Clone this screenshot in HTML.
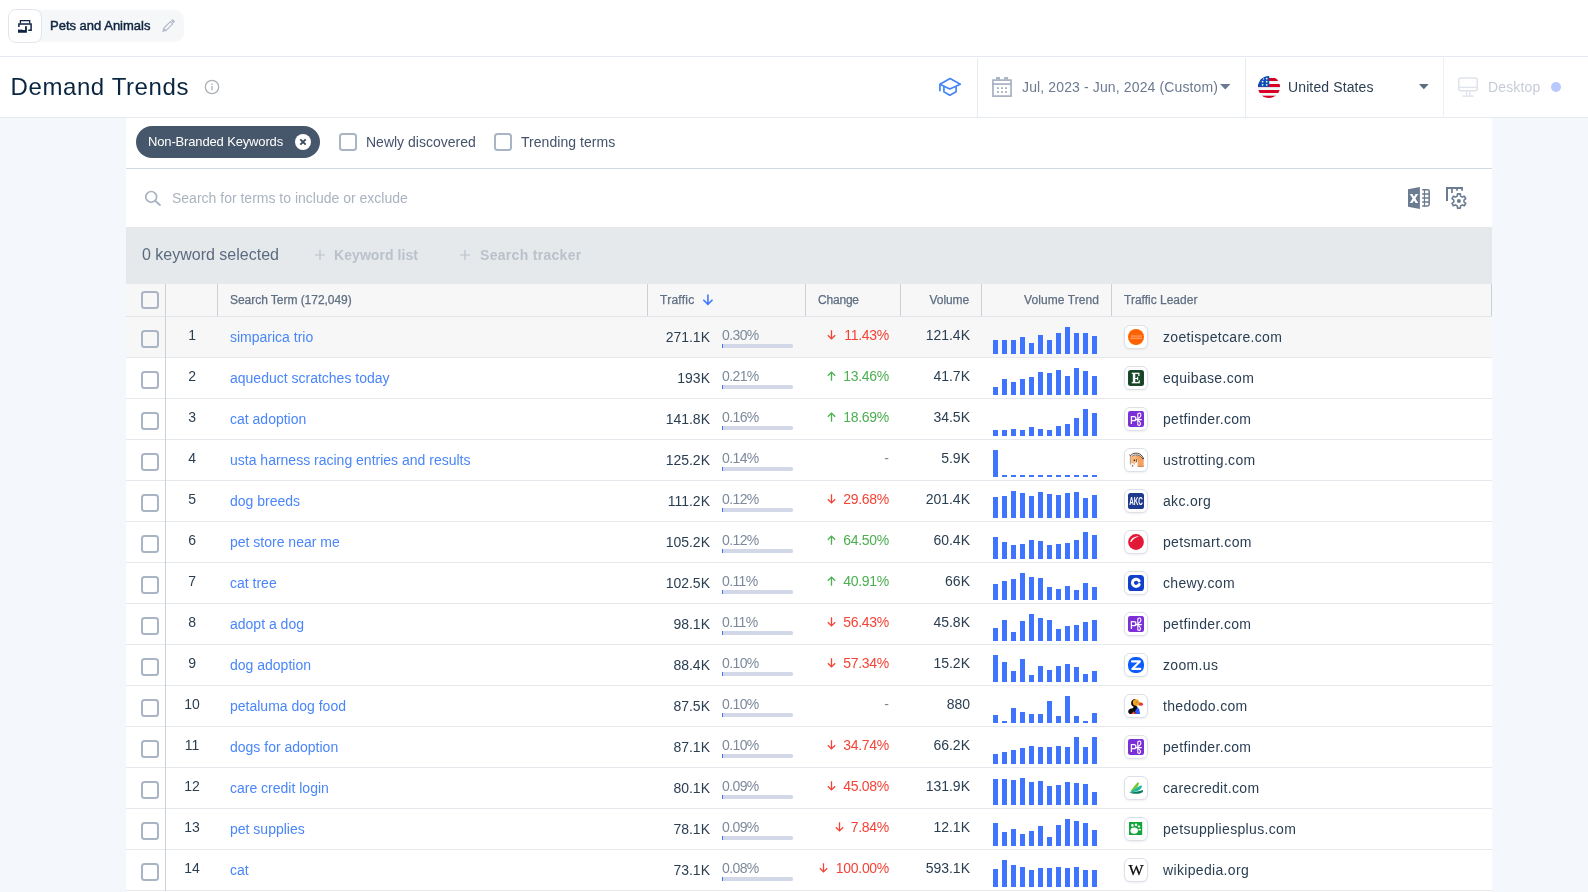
<!DOCTYPE html><html><head><meta charset="utf-8"><title>Demand Trends</title><style>
*{box-sizing:border-box;margin:0;padding:0}
html,body{width:1588px;height:892px;overflow:hidden;background:#f4f7fc;font-family:"Liberation Sans",sans-serif;color:#2a3e52}
#root{position:absolute;left:0;top:0;width:1588px;height:892px;will-change:transform}
.a{position:absolute;white-space:nowrap;line-height:1}
#top{position:absolute;left:0;top:0;width:1588px;height:57px;background:#fff;border-bottom:1px solid #e5e9f0}
#bar{position:absolute;left:0;top:57px;width:1588px;height:61px;background:#fff;border-bottom:1px solid #e5e9f0}
#card{position:absolute;left:126px;top:118px;width:1366px;height:774px;background:#fff}
.cb{position:absolute;width:18px;height:18px;border:2px solid #a9b4c5;border-radius:3.500px;background:#fff}
.row{position:absolute;left:126px;width:1366px;height:41px;border-bottom:1px solid #e5e8ec}
.t14{font-size:14px}
.lnk{color:#4a86f9}
.gr{color:#7d8a9b}
.red{color:#f44336}
.grn{color:#4caf50}
.vb{position:absolute;width:5px;background:#3e74fe}
.fav{position:absolute;width:24px;height:24px;border:1px solid #dce1e9;border-radius:6px;background:#fff;box-shadow:0 1px 2px rgba(20,40,80,.08)}
.fav svg{position:absolute;left:3px;top:3px;width:16px;height:16px;display:block}
.vs{position:absolute;width:1px;background:#cad1da}
</style></head><body><div id="root">
<div id="top"></div>
<div class="a" id="chip" style="left:9px;top:10px;width:175px;height:32px;background:#f6f7f8;border-radius:10px"></div>
<div class="a" id="chipicon" style="left:8px;top:9px;width:34px;height:34px;background:#fff;border:1px solid #e1e6ee;border-radius:8px"></div>
<svg class="a" id="ic-ind" style="left:18px;top:20px" width="14" height="13" viewBox="0 0 14 13"><path d="M2.400 3.600V.65h9.300v2.950" fill="none" stroke="#0f2542" stroke-width="1.300"/><path d="M.9 7V3.900h12.200v6.300h-2.800" fill="none" stroke="#0f2542" stroke-width="1.500"/><path d="M0 12.800V9.300l1.500.8V9.300l1.700.8V9.300l1.800.8h2V6.200h1.900v6.600z" fill="#0f2542"/></svg>
<div class="a" id="chiptxt" style="left:50px;top:19px;font-size:13px;color:#0f2542;-webkit-text-stroke:.45px #0f2542;letter-spacing:0px">Pets and Animals</div>
<svg class="a" id="ic-pen" style="left:162px;top:18.700px" width="13.200" height="13.200" viewBox="0 0 13.200 13.200"><path d="M1.700 9.300 8.400 2.600l2.300 2.300L4 11.600z" fill="none" stroke="#b3bbc7" stroke-width="1.200" stroke-linejoin="round"/><path d="M.2 13l1.100-3.900 2.800 2.800z" fill="#b3bbc7"/><path d="M9.100 1.700 10.700.1l2.500 2.500-1.600 1.600z" fill="#b3bbc7"/></svg>
<div id="bar"></div>
<div class="a" id="title" style="left:10.500px;top:75px;font-size:24px;color:#092540;letter-spacing:.6px">Demand Trends</div>
<svg class="a" id="ic-info" style="left:204px;top:79px" width="16" height="16" viewBox="0 0 16 16"><circle cx="8" cy="8" r="6.700" fill="none" stroke="#aab0b8" stroke-width="1.300"/><rect x="7.350" y="7" width="1.300" height="4.300" fill="#aab0b8"/><rect x="7.350" y="4.600" width="1.300" height="1.400" fill="#aab0b8"/></svg>
<svg class="a" id="ic-edu" style="left:938px;top:77px" width="24" height="20" viewBox="0 0 24 20"><path d="M12.100 1.500 1.900 7.200l9.900 4.800 10.500-4.800z" fill="none" stroke="#4385f5" stroke-width="1.700" stroke-linejoin="round"/><path d="M5.900 9.300v5.500l5.900 3.400 6.300-3.400V9.300" fill="none" stroke="#4385f5" stroke-width="1.700" stroke-linejoin="round"/><path d="M1.900 7.200v7" stroke="#4385f5" stroke-width="1.700"/></svg>
<div class="vs" style="left:977px;top:58px;height:60px;background:#e8ebf0"></div>
<div class="vs" style="left:1245px;top:58px;height:60px;background:#e8ebf0"></div>
<div class="vs" style="left:1443px;top:58px;height:60px;background:#eef0f4"></div>
<svg class="a" id="ic-cal" style="left:992px;top:77px" width="20" height="20" viewBox="0 0 20 20"><rect x=".95" y="3.100" width="18.100" height="16" fill="none" stroke="#a8b1c2" stroke-width="1.700"/><rect x=".1" y="6.200" width="19.800" height="1.700" fill="#a8b1c2"/><rect x="4" y=".1" width="4" height="2.400" fill="#a8b1c2"/><rect x="12.100" y=".1" width="4" height="2.400" fill="#a8b1c2"/><g fill="#a8b1c2"><rect x="5" y="10.200" width="1.900" height="1.800"/><rect x="9" y="10.200" width="1.900" height="1.800"/><rect x="13" y="10.200" width="1.900" height="1.800"/><rect x="5" y="14.100" width="1.900" height="1.800"/><rect x="9" y="14.100" width="1.900" height="1.800"/><rect x="13" y="14.100" width="1.900" height="1.800"/></g></svg>
<div class="a" id="date" style="left:1022px;top:80px;font-size:14px;color:#6b7a90;letter-spacing:.13px">Jul, 2023 - Jun, 2024 (Custom)</div>
<svg class="a" style="left:1220px;top:84px" width="11" height="6" viewBox="0 0 11 6"><path d="M0 0h10.500L5.250 5.500z" fill="#6b7a90"/></svg>
<svg class="a" id="flag" style="left:1258px;top:76px" width="22" height="22" viewBox="0 0 22 22"><defs><clipPath id="fc"><circle cx="11" cy="11" r="11"/></clipPath></defs><g clip-path="url(#fc)"><rect width="22" height="22" fill="#f1f8f8"/><g fill="#d80027"><rect y="2" width="22" height="3"/><rect y="8" width="22" height="3.100"/><rect y="14" width="22" height="3"/><rect y="19.700" width="22" height="2.300"/></g><rect width="11.200" height="10.900" fill="#0b4fb6"/><g fill="#f1f8f8"><circle cx="8.700" cy="2.600" r=".9"/><circle cx="4.600" cy="5.700" r=".9"/><circle cx="8.700" cy="5.700" r=".9"/><circle cx="4.600" cy="8.800" r=".9"/><circle cx="8.700" cy="8.800" r=".9"/><circle cx="5.500" cy="2.900" r=".7"/></g></g></svg>
<div class="a" id="country" style="left:1288px;top:80px;font-size:14px;color:#2a3e52;letter-spacing:.12px">United States</div>
<svg class="a" style="left:1419.300px;top:84px" width="10" height="6" viewBox="0 0 10 6"><path d="M0 0h9.700L4.850 5.300z" fill="#5b6b80"/></svg>
<svg class="a" id="ic-desk" style="left:1458px;top:77px" width="20" height="20" viewBox="0 0 20 20"><rect x=".75" y=".95" width="18.500" height="12.800" rx="2" fill="none" stroke="#dfe3ec" stroke-width="1.500"/><path d="M1 10.400h18" stroke="#dfe3ec" stroke-width="1.300"/><path d="M8.600 14v4.500M11.800 14v4.500" stroke="#dfe3ec" stroke-width="1.300" fill="none"/><path d="M4.500 19.100h11.100" stroke="#dfe3ec" stroke-width="1.400"/></svg>
<div class="a" id="desk" style="left:1488px;top:80px;font-size:14px;color:#c7ccd7;letter-spacing:.15px">Desktop</div>
<div class="a" style="left:1551px;top:82px;width:10px;height:10px;border-radius:5px;background:#b9c8fc"></div>
<div id="card"></div>
<div class="a" id="pill" style="left:136px;top:126px;width:184px;height:32px;border-radius:16px;background:#46566b"></div>
<div class="a" id="pilltxt" style="left:148px;top:135px;font-size:13px;color:#fff;letter-spacing:-.15px">Non-Branded Keywords</div>
<svg class="a" id="pillx" style="left:295px;top:134px" width="16" height="16" viewBox="0 0 16 16"><circle cx="8" cy="8" r="8" fill="#fff"/><path d="M5.300 5.300l5.400 5.400M10.700 5.300l-5.400 5.400" stroke="#3a4a5e" stroke-width="1.900"/></svg>
<div class="cb" style="left:339px;top:133px"></div>
<div class="a" id="nd" style="left:366px;top:135px;font-size:14px;color:#43536a;letter-spacing:0px">Newly discovered</div>
<div class="cb" style="left:494px;top:133px"></div>
<div class="a" id="tt" style="left:521px;top:135px;font-size:14px;color:#43536a;letter-spacing:.04px">Trending terms</div>
<div class="a" style="left:126px;top:168px;width:1366px;height:1px;background:#d3d9e1"></div>
<svg class="a" id="ic-search" style="left:143px;top:189px" width="19" height="19" viewBox="0 0 19 19"><circle cx="8.200" cy="7.900" r="5.400" fill="none" stroke="#a8b2c1" stroke-width="1.700"/><path d="M12.200 11.800l4.700 4.200" stroke="#a8b2c1" stroke-width="1.900" stroke-linecap="round"/></svg>
<div class="a" id="ph" style="left:172px;top:191px;font-size:14px;color:#aab3c0;letter-spacing:0px">Search for terms to include or exclude</div>
<svg class="a" id="ic-xl" style="left:1408px;top:186px" width="22" height="24" viewBox="0 0 22 24"><path d="M0 3.200 11.900.9V23L0 20.700z" fill="#6b7c91"/><path d="M14.200 3.850H19.500a1.700 1.700 0 0 1 1.700 1.700V18.300a1.700 1.700 0 0 1-1.700 1.700H14.200M14.200 7.900h7M14.200 12h7M14.200 16h7" fill="none" stroke="#6b7c91" stroke-width="1.500"/><path d="M16.450 3.200V20.700" stroke="#6b7c91" stroke-width="1.200"/><path d="M1.700 8h2.700l1.600 2.700L7.600 8h2.700l-2.950 4.550 2.950 4.550H7.600L6 14.400 4.400 17.100H1.700l2.950-4.550z" fill="#fff"/></svg>
<svg class="a" id="ic-cfg" style="left:1445px;top:186px" width="24" height="24" viewBox="0 0 24 24"><path d="M2 15V1.900h16" fill="none" stroke="#6b7c91" stroke-width="2"/><path d="M6.950 2v4.900M12 2v2.800M17.050 2v2.800" stroke="#6b7c91" stroke-width="1.700"/><path d="M15.59 10.08 L15.28 7.88 L12.52 7.88 L12.21 10.08 L10.49 11.08 L8.43 10.24 L7.04 12.64 L8.80 14.01 L8.80 15.99 L7.04 17.36 L8.43 19.76 L10.49 18.92 L12.21 19.92 L12.52 22.12 L15.28 22.12 L15.59 19.92 L17.31 18.92 L19.37 19.76 L20.76 17.36 L19.00 15.99 L19.00 14.01 L20.76 12.64 L19.37 10.24 L17.31 11.08z" fill="#fff" stroke="#6b7c91" stroke-width="1.600" stroke-linejoin="round"/><circle cx="13.900" cy="15" r="2" fill="#6b7c91"/></svg>
<div class="a" style="left:126px;top:227px;width:1366px;height:57px;background:#e6e9ec"></div>
<div class="a" id="sel" style="left:142px;top:247px;font-size:16px;color:#5b6b7f">0 keyword selected</div>
<svg class="a" style="left:315px;top:250px" width="10" height="10" viewBox="0 0 10 10"><path d="M5 0v10M0 5h10" stroke="#bac1cb" stroke-width="1.200"/></svg>
<div class="a" id="kl" style="left:334px;top:248px;font-size:14px;font-weight:700;color:#bac1cb;letter-spacing:.07px">Keyword list</div>
<svg class="a" style="left:460px;top:250px" width="10" height="10" viewBox="0 0 10 10"><path d="M5 0v10M0 5h10" stroke="#bac1cb" stroke-width="1.200"/></svg>
<div class="a" id="st" style="left:480px;top:248px;font-size:14px;font-weight:700;color:#bac1cb;letter-spacing:.3px">Search tracker</div>
<div class="a" style="left:126px;top:284px;width:1366px;height:33px;background:#f7f7f7;border-bottom:1px solid #e1e5ea"></div>
<div class="vs" style="left:165px;top:284px;height:32px"></div>
<div class="vs" style="left:217px;top:284px;height:32px"></div>
<div class="vs" style="left:647px;top:284px;height:32px"></div>
<div class="vs" style="left:805px;top:284px;height:32px"></div>
<div class="vs" style="left:900px;top:284px;height:32px"></div>
<div class="vs" style="left:981px;top:284px;height:32px"></div>
<div class="vs" style="left:1111px;top:284px;height:32px"></div>
<div class="vs" style="left:1491px;top:284px;height:32px"></div>
<div class="cb" style="left:141px;top:291px;background:transparent"></div>
<div class="a" id="h1" style="left:230px;letter-spacing:-.04px;font-size:12px;color:#5f6f83;top:294px;-webkit-text-stroke:.25px #5f6f83">Search Term (172,049)</div>
<div class="a" id="h2" style="left:660px;letter-spacing:.25px;font-size:12px;color:#5f6f83;top:294px;-webkit-text-stroke:.25px #5f6f83">Traffic</div>
<svg class="a" style="left:702px;top:294px" width="12" height="12" viewBox="0 0 12 12"><path d="M5.900 .4V10.400M1.300 5.800 5.900 10.400 10.500 5.800" fill="none" stroke="#4279fe" stroke-width="1.600"/></svg>
<div class="a" id="h3" style="left:818px;letter-spacing:-.2px;font-size:12px;color:#5f6f83;top:294px;-webkit-text-stroke:.25px #5f6f83">Change</div>
<div class="a" id="h4" style="right:619px;letter-spacing:-.1px;font-size:12px;color:#5f6f83;top:294px;-webkit-text-stroke:.25px #5f6f83">Volume</div>
<div class="a" id="h5" style="right:489px;letter-spacing:.07px;font-size:12px;color:#5f6f83;top:294px;-webkit-text-stroke:.25px #5f6f83">Volume Trend</div>
<div class="a" id="h6" style="left:1124px;letter-spacing:0px;font-size:12px;color:#5f6f83;top:294px;-webkit-text-stroke:.25px #5f6f83">Traffic Leader</div>
<div class="row" style="top:317px;background:#f7f7f7"></div>
<div class="vs" style="left:165px;top:317px;height:41px"></div>
<div class="cb" style="left:141px;top:330px;background:transparent"></div>
<div class="a t14 idx" style="left:166.600px;width:51px;text-align:center;top:328px">1</div>
<div class="a t14 lnk term" style="left:230px;top:330px">simparica trio</div>
<div class="a t14 trf" style="right:878px;top:330px">271.1K</div>
<div class="a t14 gr pct" style="left:722px;top:328px;letter-spacing:-.6px">0.30%</div>
<div class="a" style="left:722px;top:344px;width:71px;height:4px;background:#d3d8e8;border-radius:1.500px"></div>
<div class="a" style="left:722px;top:344px;width:1px;height:4px;background:#3e74fe"></div>
<div class="a t14 red chg" style="right:699px;top:328px;letter-spacing:-.3px">11.43%</div>
<svg class="a arr" style="left:826.7px;top:330.4px" width="9" height="10" viewBox="0 0 9 10"><path d="M4.500 .3v8.400M.8 5.200l3.700 3.700 3.700-3.700" fill="none" stroke="#f44336" stroke-width="1.300"/></svg>
<div class="a t14 vol" style="right:618px;top:328px">121.4K</div>
<div class="vb" style="left:993px;top:340px;height:14px"></div>
<div class="vb" style="left:1002px;top:340px;height:14px"></div>
<div class="vb" style="left:1011px;top:340px;height:14px"></div>
<div class="vb" style="left:1020px;top:337px;height:17px"></div>
<div class="vb" style="left:1029px;top:343px;height:11px"></div>
<div class="vb" style="left:1038px;top:335px;height:19px"></div>
<div class="vb" style="left:1047px;top:340px;height:14px"></div>
<div class="vb" style="left:1056px;top:333px;height:21px"></div>
<div class="vb" style="left:1065px;top:327px;height:27px"></div>
<div class="vb" style="left:1074px;top:333px;height:21px"></div>
<div class="vb" style="left:1083px;top:333px;height:21px"></div>
<div class="vb" style="left:1092px;top:336px;height:18px"></div>
<div class="fav" style="left:1124px;top:325px"><svg viewBox="0 0 16 16"><circle cx="8" cy="8" r="8" fill="#ff6200"/><rect x="2.900" y="6.300" width="11" height="1.500" fill="#ff9350"/><rect x="2.300" y="8.700" width="11.600" height="1.100" fill="#ffa872"/></svg></div>
<div class="a dom" style="left:1163px;top:330px;font-size:14px;color:#2a3e52;letter-spacing:.33px">zoetispetcare.com</div>
<div class="row" style="top:358px;background:#fff"></div>
<div class="vs" style="left:165px;top:358px;height:41px"></div>
<div class="cb" style="left:141px;top:371px;background:transparent"></div>
<div class="a t14 idx" style="left:166.600px;width:51px;text-align:center;top:369px">2</div>
<div class="a t14 lnk term" style="left:230px;top:371px">aqueduct scratches today</div>
<div class="a t14 trf" style="right:878px;top:371px">193K</div>
<div class="a t14 gr pct" style="left:722px;top:369px;letter-spacing:-.6px">0.21%</div>
<div class="a" style="left:722px;top:385px;width:71px;height:4px;background:#d3d8e8;border-radius:1.500px"></div>
<div class="a" style="left:722px;top:385px;width:1px;height:4px;background:#3e74fe"></div>
<div class="a t14 grn chg" style="right:699px;top:369px;letter-spacing:-.3px">13.46%</div>
<svg class="a arr" style="left:826.7px;top:371.4px" width="9" height="10" viewBox="0 0 9 10"><path d="M4.500 9.700v-8.400M.8 4.800l3.700-3.700 3.700 3.700" fill="none" stroke="#4caf50" stroke-width="1.300"/></svg>
<div class="a t14 vol" style="right:618px;top:369px">41.7K</div>
<div class="vb" style="left:993px;top:387px;height:8px"></div>
<div class="vb" style="left:1002px;top:379px;height:16px"></div>
<div class="vb" style="left:1011px;top:382px;height:13px"></div>
<div class="vb" style="left:1020px;top:379px;height:16px"></div>
<div class="vb" style="left:1029px;top:377px;height:18px"></div>
<div class="vb" style="left:1038px;top:372px;height:23px"></div>
<div class="vb" style="left:1047px;top:373px;height:22px"></div>
<div class="vb" style="left:1056px;top:370px;height:25px"></div>
<div class="vb" style="left:1065px;top:376px;height:19px"></div>
<div class="vb" style="left:1074px;top:368px;height:27px"></div>
<div class="vb" style="left:1083px;top:371px;height:24px"></div>
<div class="vb" style="left:1092px;top:376px;height:19px"></div>
<div class="fav" style="left:1124px;top:366px"><svg viewBox="0 0 16 16"><rect width="16" height="16" rx="2.500" fill="#1b4a2c"/><rect x="1.700" y="1.700" width="12.600" height="12.600" rx="1.200" fill="none" stroke="#123a20" stroke-width=".7"/><text x="8" y="12.950" font-family="Liberation Serif, serif" font-weight="700" font-size="15" fill="#fff" stroke="#fff" stroke-width=".35" text-anchor="middle" textLength="8.600" lengthAdjust="spacingAndGlyphs">E</text></svg></div>
<div class="a dom" style="left:1163px;top:371px;font-size:14px;color:#2a3e52;letter-spacing:.33px">equibase.com</div>
<div class="row" style="top:399px;background:#fff"></div>
<div class="vs" style="left:165px;top:399px;height:41px"></div>
<div class="cb" style="left:141px;top:412px;background:transparent"></div>
<div class="a t14 idx" style="left:166.600px;width:51px;text-align:center;top:410px">3</div>
<div class="a t14 lnk term" style="left:230px;top:412px">cat adoption</div>
<div class="a t14 trf" style="right:878px;top:412px">141.8K</div>
<div class="a t14 gr pct" style="left:722px;top:410px;letter-spacing:-.6px">0.16%</div>
<div class="a" style="left:722px;top:426px;width:71px;height:4px;background:#d3d8e8;border-radius:1.500px"></div>
<div class="a" style="left:722px;top:426px;width:1px;height:4px;background:#3e74fe"></div>
<div class="a t14 grn chg" style="right:699px;top:410px;letter-spacing:-.3px">18.69%</div>
<svg class="a arr" style="left:826.7px;top:412.4px" width="9" height="10" viewBox="0 0 9 10"><path d="M4.500 9.700v-8.400M.8 4.800l3.700-3.700 3.700 3.700" fill="none" stroke="#4caf50" stroke-width="1.300"/></svg>
<div class="a t14 vol" style="right:618px;top:410px">34.5K</div>
<div class="vb" style="left:993px;top:430px;height:6px"></div>
<div class="vb" style="left:1002px;top:430px;height:6px"></div>
<div class="vb" style="left:1011px;top:429px;height:7px"></div>
<div class="vb" style="left:1020px;top:430px;height:6px"></div>
<div class="vb" style="left:1029px;top:427px;height:9px"></div>
<div class="vb" style="left:1038px;top:429px;height:7px"></div>
<div class="vb" style="left:1047px;top:430px;height:6px"></div>
<div class="vb" style="left:1056px;top:426px;height:10px"></div>
<div class="vb" style="left:1065px;top:424px;height:12px"></div>
<div class="vb" style="left:1074px;top:418px;height:18px"></div>
<div class="vb" style="left:1083px;top:409px;height:27px"></div>
<div class="vb" style="left:1092px;top:413px;height:23px"></div>
<div class="fav" style="left:1124px;top:407px"><svg viewBox="0 0 16 16"><rect width="16" height="16" rx="2.200" fill="#7c2fd9"/><path d="M3.400 12.900V5.700h2.500a2 2 0 0 1 0 4H3.400" fill="none" stroke="#fff" stroke-width="1.250"/><path d="M9.800 2.800V13.900M9.800 7.700C12 6.600 13.300 4.600 12.700 2.900 12.100 1.400 10.200 1.700 9.800 3.300M9.800 9.400C11.600 10.400 12.900 12 12.300 13.500 11.800 14.800 10.200 14.500 9.800 13.500M7.900 8.600H13.400" fill="none" stroke="#fff" stroke-width="1.050" stroke-linecap="round"/></svg></div>
<div class="a dom" style="left:1163px;top:412px;font-size:14px;color:#2a3e52;letter-spacing:.33px">petfinder.com</div>
<div class="row" style="top:440px;background:#fff"></div>
<div class="vs" style="left:165px;top:440px;height:41px"></div>
<div class="cb" style="left:141px;top:453px;background:transparent"></div>
<div class="a t14 idx" style="left:166.600px;width:51px;text-align:center;top:451px">4</div>
<div class="a t14 lnk term" style="left:230px;top:453px">usta harness racing entries and results</div>
<div class="a t14 trf" style="right:878px;top:453px">125.2K</div>
<div class="a t14 gr pct" style="left:722px;top:451px;letter-spacing:-.6px">0.14%</div>
<div class="a" style="left:722px;top:467px;width:71px;height:4px;background:#d3d8e8;border-radius:1.500px"></div>
<div class="a" style="left:722px;top:467px;width:1px;height:4px;background:#3e74fe"></div>
<div class="a t14 gr chg" style="right:699px;top:451px">-</div>
<div class="a t14 vol" style="right:618px;top:451px">5.9K</div>
<div class="vb" style="left:993px;top:450px;height:27px"></div>
<div class="vb" style="left:1002px;top:475px;height:2px"></div>
<div class="vb" style="left:1011px;top:475px;height:2px"></div>
<div class="vb" style="left:1020px;top:475px;height:2px"></div>
<div class="vb" style="left:1029px;top:475px;height:2px"></div>
<div class="vb" style="left:1038px;top:475px;height:2px"></div>
<div class="vb" style="left:1047px;top:475px;height:2px"></div>
<div class="vb" style="left:1056px;top:475px;height:2px"></div>
<div class="vb" style="left:1065px;top:475px;height:2px"></div>
<div class="vb" style="left:1074px;top:475px;height:2px"></div>
<div class="vb" style="left:1083px;top:475px;height:2px"></div>
<div class="vb" style="left:1092px;top:475px;height:2px"></div>
<div class="fav" style="left:1124px;top:448px"><svg viewBox="0 0 16 16"><rect width="16" height="16" fill="#fff"/><path d="M9.600 14.600V8.500C9.200 7 8 5.500 6.500 4.800L8 3.400C11 3.100 14 4.500 15.700 7.200V14.600z" fill="#f5a25e"/><path d="M9.600 14.400h6.100" stroke="#c4663a" stroke-width=".8"/><path d="M2.600 5.200C3.500 3.800 5.500 3.300 7.500 4 9 5 9.900 7 9.600 9.200L7.600 10.600 6 13.800 4.600 14.700 3 14 2.400 11z" fill="#f8b87c"/><path d="M2.500 10.500 5.800 11.600 6 13.700 4.600 14.800 2.900 14z" fill="#f1f1f4"/><path d="M3.900 14.300l.7-1.300.8 1.300z" fill="#222"/><path d="M3.200 2.900C5 .9 9.500.7 11.500 1.900 13.600 3 15.200 5 15.700 7.200" stroke="#1a1a1a" stroke-width=".8" fill="none"/><path d="M4.300 4.100C6 2.700 9.500 2.500 11.500 3.600 13 4.500 14.300 5.800 14.900 7.200" stroke="#2a2a2a" stroke-width=".7" fill="none"/><path d="M.9 2.100l2.500 1.400-.7 1.800z" fill="#a3451f"/><circle cx="6.400" cy="8.300" r=".8" fill="#111"/><path d="M8.500 7v3.400" stroke="#333" stroke-width=".6"/><path d="M2.300 5.200v7.300" stroke="#555" stroke-width=".5"/></svg></div>
<div class="a dom" style="left:1163px;top:453px;font-size:14px;color:#2a3e52;letter-spacing:.33px">ustrotting.com</div>
<div class="row" style="top:481px;background:#fff"></div>
<div class="vs" style="left:165px;top:481px;height:41px"></div>
<div class="cb" style="left:141px;top:494px;background:transparent"></div>
<div class="a t14 idx" style="left:166.600px;width:51px;text-align:center;top:492px">5</div>
<div class="a t14 lnk term" style="left:230px;top:494px">dog breeds</div>
<div class="a t14 trf" style="right:878px;top:494px">111.2K</div>
<div class="a t14 gr pct" style="left:722px;top:492px;letter-spacing:-.6px">0.12%</div>
<div class="a" style="left:722px;top:508px;width:71px;height:4px;background:#d3d8e8;border-radius:1.500px"></div>
<div class="a" style="left:722px;top:508px;width:1px;height:4px;background:#3e74fe"></div>
<div class="a t14 red chg" style="right:699px;top:492px;letter-spacing:-.3px">29.68%</div>
<svg class="a arr" style="left:826.7px;top:494.4px" width="9" height="10" viewBox="0 0 9 10"><path d="M4.500 .3v8.400M.8 5.200l3.700 3.700 3.700-3.700" fill="none" stroke="#f44336" stroke-width="1.300"/></svg>
<div class="a t14 vol" style="right:618px;top:492px">201.4K</div>
<div class="vb" style="left:993px;top:497px;height:21px"></div>
<div class="vb" style="left:1002px;top:496px;height:22px"></div>
<div class="vb" style="left:1011px;top:491px;height:27px"></div>
<div class="vb" style="left:1020px;top:493px;height:25px"></div>
<div class="vb" style="left:1029px;top:496px;height:22px"></div>
<div class="vb" style="left:1038px;top:492px;height:26px"></div>
<div class="vb" style="left:1047px;top:494px;height:24px"></div>
<div class="vb" style="left:1056px;top:495px;height:23px"></div>
<div class="vb" style="left:1065px;top:493px;height:25px"></div>
<div class="vb" style="left:1074px;top:492px;height:26px"></div>
<div class="vb" style="left:1083px;top:498px;height:20px"></div>
<div class="vb" style="left:1092px;top:495px;height:23px"></div>
<div class="fav" style="left:1124px;top:489px"><svg viewBox="0 0 16 16"><rect width="16" height="16" rx="2.600" fill="#1d3a8f"/><text x="8.050" y="12.100" font-family="Liberation Sans, sans-serif" font-weight="700" font-size="11.600" fill="#fff" text-anchor="middle" textLength="13.800" lengthAdjust="spacingAndGlyphs">AKC</text></svg></div>
<div class="a dom" style="left:1163px;top:494px;font-size:14px;color:#2a3e52;letter-spacing:.33px">akc.org</div>
<div class="row" style="top:522px;background:#fff"></div>
<div class="vs" style="left:165px;top:522px;height:41px"></div>
<div class="cb" style="left:141px;top:535px;background:transparent"></div>
<div class="a t14 idx" style="left:166.600px;width:51px;text-align:center;top:533px">6</div>
<div class="a t14 lnk term" style="left:230px;top:535px">pet store near me</div>
<div class="a t14 trf" style="right:878px;top:535px">105.2K</div>
<div class="a t14 gr pct" style="left:722px;top:533px;letter-spacing:-.6px">0.12%</div>
<div class="a" style="left:722px;top:549px;width:71px;height:4px;background:#d3d8e8;border-radius:1.500px"></div>
<div class="a" style="left:722px;top:549px;width:1px;height:4px;background:#3e74fe"></div>
<div class="a t14 grn chg" style="right:699px;top:533px;letter-spacing:-.3px">64.50%</div>
<svg class="a arr" style="left:826.7px;top:535.4px" width="9" height="10" viewBox="0 0 9 10"><path d="M4.500 9.700v-8.400M.8 4.800l3.700-3.700 3.700 3.700" fill="none" stroke="#4caf50" stroke-width="1.300"/></svg>
<div class="a t14 vol" style="right:618px;top:533px">60.4K</div>
<div class="vb" style="left:993px;top:537px;height:22px"></div>
<div class="vb" style="left:1002px;top:542px;height:17px"></div>
<div class="vb" style="left:1011px;top:545px;height:14px"></div>
<div class="vb" style="left:1020px;top:544px;height:15px"></div>
<div class="vb" style="left:1029px;top:540px;height:19px"></div>
<div class="vb" style="left:1038px;top:541px;height:18px"></div>
<div class="vb" style="left:1047px;top:545px;height:14px"></div>
<div class="vb" style="left:1056px;top:544px;height:15px"></div>
<div class="vb" style="left:1065px;top:543px;height:16px"></div>
<div class="vb" style="left:1074px;top:540px;height:19px"></div>
<div class="vb" style="left:1083px;top:532px;height:27px"></div>
<div class="vb" style="left:1092px;top:535px;height:24px"></div>
<div class="fav" style="left:1124px;top:530px"><svg viewBox="0 0 16 16"><circle cx="8" cy="8" r="7.900" fill="#e31837"/><path d="M2.300 7.900C2.800 4.500 6.500 2 11 2.700 8 3.100 5 4.900 3.300 7.900z" fill="#fff"/></svg></div>
<div class="a dom" style="left:1163px;top:535px;font-size:14px;color:#2a3e52;letter-spacing:.33px">petsmart.com</div>
<div class="row" style="top:563px;background:#fff"></div>
<div class="vs" style="left:165px;top:563px;height:41px"></div>
<div class="cb" style="left:141px;top:576px;background:transparent"></div>
<div class="a t14 idx" style="left:166.600px;width:51px;text-align:center;top:574px">7</div>
<div class="a t14 lnk term" style="left:230px;top:576px">cat tree</div>
<div class="a t14 trf" style="right:878px;top:576px">102.5K</div>
<div class="a t14 gr pct" style="left:722px;top:574px;letter-spacing:-.6px">0.11%</div>
<div class="a" style="left:722px;top:590px;width:71px;height:4px;background:#d3d8e8;border-radius:1.500px"></div>
<div class="a" style="left:722px;top:590px;width:1px;height:4px;background:#3e74fe"></div>
<div class="a t14 grn chg" style="right:699px;top:574px;letter-spacing:-.3px">40.91%</div>
<svg class="a arr" style="left:826.7px;top:576.4px" width="9" height="10" viewBox="0 0 9 10"><path d="M4.500 9.700v-8.400M.8 4.800l3.700-3.700 3.700 3.700" fill="none" stroke="#4caf50" stroke-width="1.300"/></svg>
<div class="a t14 vol" style="right:618px;top:574px">66K</div>
<div class="vb" style="left:993px;top:584px;height:16px"></div>
<div class="vb" style="left:1002px;top:581px;height:19px"></div>
<div class="vb" style="left:1011px;top:579px;height:21px"></div>
<div class="vb" style="left:1020px;top:573px;height:27px"></div>
<div class="vb" style="left:1029px;top:577px;height:23px"></div>
<div class="vb" style="left:1038px;top:578px;height:22px"></div>
<div class="vb" style="left:1047px;top:587px;height:13px"></div>
<div class="vb" style="left:1056px;top:589px;height:11px"></div>
<div class="vb" style="left:1065px;top:586px;height:14px"></div>
<div class="vb" style="left:1074px;top:590px;height:10px"></div>
<div class="vb" style="left:1083px;top:583px;height:17px"></div>
<div class="vb" style="left:1092px;top:587px;height:13px"></div>
<div class="fav" style="left:1124px;top:571px"><svg viewBox="0 0 16 16"><rect width="16" height="16" rx="3.600" fill="#1140cc"/><path d="M11.100 5.900A3.600 3.600 0 1 0 11.200 9.550" fill="none" stroke="#fff" stroke-width="3" stroke-linecap="round"/></svg></div>
<div class="a dom" style="left:1163px;top:576px;font-size:14px;color:#2a3e52;letter-spacing:.33px">chewy.com</div>
<div class="row" style="top:604px;background:#fff"></div>
<div class="vs" style="left:165px;top:604px;height:41px"></div>
<div class="cb" style="left:141px;top:617px;background:transparent"></div>
<div class="a t14 idx" style="left:166.600px;width:51px;text-align:center;top:615px">8</div>
<div class="a t14 lnk term" style="left:230px;top:617px">adopt a dog</div>
<div class="a t14 trf" style="right:878px;top:617px">98.1K</div>
<div class="a t14 gr pct" style="left:722px;top:615px;letter-spacing:-.6px">0.11%</div>
<div class="a" style="left:722px;top:631px;width:71px;height:4px;background:#d3d8e8;border-radius:1.500px"></div>
<div class="a" style="left:722px;top:631px;width:1px;height:4px;background:#3e74fe"></div>
<div class="a t14 red chg" style="right:699px;top:615px;letter-spacing:-.3px">56.43%</div>
<svg class="a arr" style="left:826.7px;top:617.4px" width="9" height="10" viewBox="0 0 9 10"><path d="M4.500 .3v8.400M.8 5.200l3.700 3.700 3.700-3.700" fill="none" stroke="#f44336" stroke-width="1.300"/></svg>
<div class="a t14 vol" style="right:618px;top:615px">45.8K</div>
<div class="vb" style="left:993px;top:628px;height:13px"></div>
<div class="vb" style="left:1002px;top:620px;height:21px"></div>
<div class="vb" style="left:1011px;top:632px;height:9px"></div>
<div class="vb" style="left:1020px;top:621px;height:20px"></div>
<div class="vb" style="left:1029px;top:614px;height:27px"></div>
<div class="vb" style="left:1038px;top:618px;height:23px"></div>
<div class="vb" style="left:1047px;top:620px;height:21px"></div>
<div class="vb" style="left:1056px;top:629px;height:12px"></div>
<div class="vb" style="left:1065px;top:626px;height:15px"></div>
<div class="vb" style="left:1074px;top:625px;height:16px"></div>
<div class="vb" style="left:1083px;top:622px;height:19px"></div>
<div class="vb" style="left:1092px;top:620px;height:21px"></div>
<div class="fav" style="left:1124px;top:612px"><svg viewBox="0 0 16 16"><rect width="16" height="16" rx="2.200" fill="#7c2fd9"/><path d="M3.400 12.900V5.700h2.500a2 2 0 0 1 0 4H3.400" fill="none" stroke="#fff" stroke-width="1.250"/><path d="M9.800 2.800V13.900M9.800 7.700C12 6.600 13.300 4.600 12.700 2.900 12.100 1.400 10.200 1.700 9.800 3.300M9.800 9.400C11.600 10.400 12.900 12 12.300 13.500 11.800 14.800 10.200 14.500 9.800 13.500M7.900 8.600H13.400" fill="none" stroke="#fff" stroke-width="1.050" stroke-linecap="round"/></svg></div>
<div class="a dom" style="left:1163px;top:617px;font-size:14px;color:#2a3e52;letter-spacing:.33px">petfinder.com</div>
<div class="row" style="top:645px;background:#fff"></div>
<div class="vs" style="left:165px;top:645px;height:41px"></div>
<div class="cb" style="left:141px;top:658px;background:transparent"></div>
<div class="a t14 idx" style="left:166.600px;width:51px;text-align:center;top:656px">9</div>
<div class="a t14 lnk term" style="left:230px;top:658px">dog adoption</div>
<div class="a t14 trf" style="right:878px;top:658px">88.4K</div>
<div class="a t14 gr pct" style="left:722px;top:656px;letter-spacing:-.6px">0.10%</div>
<div class="a" style="left:722px;top:672px;width:71px;height:4px;background:#d3d8e8;border-radius:1.500px"></div>
<div class="a" style="left:722px;top:672px;width:1px;height:4px;background:#3e74fe"></div>
<div class="a t14 red chg" style="right:699px;top:656px;letter-spacing:-.3px">57.34%</div>
<svg class="a arr" style="left:826.7px;top:658.4px" width="9" height="10" viewBox="0 0 9 10"><path d="M4.500 .3v8.400M.8 5.200l3.700 3.700 3.700-3.700" fill="none" stroke="#f44336" stroke-width="1.300"/></svg>
<div class="a t14 vol" style="right:618px;top:656px">15.2K</div>
<div class="vb" style="left:993px;top:655px;height:27px"></div>
<div class="vb" style="left:1002px;top:662px;height:20px"></div>
<div class="vb" style="left:1011px;top:671px;height:11px"></div>
<div class="vb" style="left:1020px;top:659px;height:23px"></div>
<div class="vb" style="left:1029px;top:675px;height:7px"></div>
<div class="vb" style="left:1038px;top:666px;height:16px"></div>
<div class="vb" style="left:1047px;top:670px;height:12px"></div>
<div class="vb" style="left:1056px;top:666px;height:16px"></div>
<div class="vb" style="left:1065px;top:664px;height:18px"></div>
<div class="vb" style="left:1074px;top:667px;height:15px"></div>
<div class="vb" style="left:1083px;top:674px;height:8px"></div>
<div class="vb" style="left:1092px;top:671px;height:11px"></div>
<div class="fav" style="left:1124px;top:653px"><svg viewBox="0 0 16 16"><rect width="16" height="16" rx="7" fill="#0b5cff"/><path d="M4 4.400h7.900L4.300 11.900h8" fill="none" stroke="#fff" stroke-width="2.100" stroke-linejoin="round" stroke-linecap="round"/></svg></div>
<div class="a dom" style="left:1163px;top:658px;font-size:14px;color:#2a3e52;letter-spacing:.33px">zoom.us</div>
<div class="row" style="top:686px;background:#fff"></div>
<div class="vs" style="left:165px;top:686px;height:41px"></div>
<div class="cb" style="left:141px;top:699px;background:transparent"></div>
<div class="a t14 idx" style="left:166.600px;width:51px;text-align:center;top:697px">10</div>
<div class="a t14 lnk term" style="left:230px;top:699px">petaluma dog food</div>
<div class="a t14 trf" style="right:878px;top:699px">87.5K</div>
<div class="a t14 gr pct" style="left:722px;top:697px;letter-spacing:-.6px">0.10%</div>
<div class="a" style="left:722px;top:713px;width:71px;height:4px;background:#d3d8e8;border-radius:1.500px"></div>
<div class="a" style="left:722px;top:713px;width:1px;height:4px;background:#3e74fe"></div>
<div class="a t14 gr chg" style="right:699px;top:697px">-</div>
<div class="a t14 vol" style="right:618px;top:697px">880</div>
<div class="vb" style="left:993px;top:715px;height:8px"></div>
<div class="vb" style="left:1002px;top:721px;height:2px"></div>
<div class="vb" style="left:1011px;top:708px;height:15px"></div>
<div class="vb" style="left:1020px;top:712px;height:11px"></div>
<div class="vb" style="left:1029px;top:714px;height:9px"></div>
<div class="vb" style="left:1038px;top:714px;height:9px"></div>
<div class="vb" style="left:1047px;top:701px;height:22px"></div>
<div class="vb" style="left:1056px;top:716px;height:7px"></div>
<div class="vb" style="left:1065px;top:696px;height:27px"></div>
<div class="vb" style="left:1074px;top:716px;height:7px"></div>
<div class="vb" style="left:1083px;top:721px;height:2px"></div>
<div class="vb" style="left:1092px;top:713px;height:10px"></div>
<div class="fav" style="left:1124px;top:694px"><svg viewBox="0 0 16 16"><rect width="16" height="16" fill="#fff"/><path d="M7.500 1.100C5 1 3.100 2.800 3.100 5.200c0 1.700 .9 2.800 2.300 3.300C5.600 9.700 5 10.400 3.600 10.600 1.500 10.800 .1 12 .2 13.700c.1 1.500 1.300 2.300 3 2.300h4.600L9.600 9.200 8 7.600z" fill="#0c0c0c"/><ellipse cx="8" cy="4.500" rx="3.100" ry="3.300" fill="#f5a31c"/><path d="M9.500 2.500l3 2 -.5 3L9 7z" fill="#f5a31c"/><ellipse cx="13" cy="6.200" rx="2.050" ry="1.600" fill="#e03a3c"/><circle cx="8.900" cy="4.400" r=".65" fill="#6a7f95"/><path d="M9.600 9.200 11.300 11.500 12.100 15.900H7.800L7 13.200 8.300 11z" fill="#2b53ff"/><path d="M5.600 13.200 7.800 15.900H3.100z" fill="#f04e23"/></svg></div>
<div class="a dom" style="left:1163px;top:699px;font-size:14px;color:#2a3e52;letter-spacing:.33px">thedodo.com</div>
<div class="row" style="top:727px;background:#fff"></div>
<div class="vs" style="left:165px;top:727px;height:41px"></div>
<div class="cb" style="left:141px;top:740px;background:transparent"></div>
<div class="a t14 idx" style="left:166.600px;width:51px;text-align:center;top:738px">11</div>
<div class="a t14 lnk term" style="left:230px;top:740px">dogs for adoption</div>
<div class="a t14 trf" style="right:878px;top:740px">87.1K</div>
<div class="a t14 gr pct" style="left:722px;top:738px;letter-spacing:-.6px">0.10%</div>
<div class="a" style="left:722px;top:754px;width:71px;height:4px;background:#d3d8e8;border-radius:1.500px"></div>
<div class="a" style="left:722px;top:754px;width:1px;height:4px;background:#3e74fe"></div>
<div class="a t14 red chg" style="right:699px;top:738px;letter-spacing:-.3px">34.74%</div>
<svg class="a arr" style="left:826.7px;top:740.4px" width="9" height="10" viewBox="0 0 9 10"><path d="M4.500 .3v8.400M.8 5.200l3.700 3.700 3.700-3.700" fill="none" stroke="#f44336" stroke-width="1.300"/></svg>
<div class="a t14 vol" style="right:618px;top:738px">66.2K</div>
<div class="vb" style="left:993px;top:754px;height:10px"></div>
<div class="vb" style="left:1002px;top:752px;height:12px"></div>
<div class="vb" style="left:1011px;top:750px;height:14px"></div>
<div class="vb" style="left:1020px;top:748px;height:16px"></div>
<div class="vb" style="left:1029px;top:746px;height:18px"></div>
<div class="vb" style="left:1038px;top:747px;height:17px"></div>
<div class="vb" style="left:1047px;top:747px;height:17px"></div>
<div class="vb" style="left:1056px;top:746px;height:18px"></div>
<div class="vb" style="left:1065px;top:747px;height:17px"></div>
<div class="vb" style="left:1074px;top:737px;height:27px"></div>
<div class="vb" style="left:1083px;top:747px;height:17px"></div>
<div class="vb" style="left:1092px;top:737px;height:27px"></div>
<div class="fav" style="left:1124px;top:735px"><svg viewBox="0 0 16 16"><rect width="16" height="16" rx="2.200" fill="#7c2fd9"/><path d="M3.400 12.900V5.700h2.500a2 2 0 0 1 0 4H3.400" fill="none" stroke="#fff" stroke-width="1.250"/><path d="M9.800 2.800V13.900M9.800 7.700C12 6.600 13.300 4.600 12.700 2.900 12.100 1.400 10.200 1.700 9.800 3.300M9.800 9.400C11.600 10.400 12.900 12 12.300 13.500 11.800 14.800 10.200 14.500 9.800 13.500M7.900 8.600H13.400" fill="none" stroke="#fff" stroke-width="1.050" stroke-linecap="round"/></svg></div>
<div class="a dom" style="left:1163px;top:740px;font-size:14px;color:#2a3e52;letter-spacing:.33px">petfinder.com</div>
<div class="row" style="top:768px;background:#fff"></div>
<div class="vs" style="left:165px;top:768px;height:41px"></div>
<div class="cb" style="left:141px;top:781px;background:transparent"></div>
<div class="a t14 idx" style="left:166.600px;width:51px;text-align:center;top:779px">12</div>
<div class="a t14 lnk term" style="left:230px;top:781px">care credit login</div>
<div class="a t14 trf" style="right:878px;top:781px">80.1K</div>
<div class="a t14 gr pct" style="left:722px;top:779px;letter-spacing:-.6px">0.09%</div>
<div class="a" style="left:722px;top:795px;width:71px;height:4px;background:#d3d8e8;border-radius:1.500px"></div>
<div class="a" style="left:722px;top:795px;width:1px;height:4px;background:#3e74fe"></div>
<div class="a t14 red chg" style="right:699px;top:779px;letter-spacing:-.3px">45.08%</div>
<svg class="a arr" style="left:826.7px;top:781.4px" width="9" height="10" viewBox="0 0 9 10"><path d="M4.500 .3v8.400M.8 5.200l3.700 3.700 3.700-3.700" fill="none" stroke="#f44336" stroke-width="1.300"/></svg>
<div class="a t14 vol" style="right:618px;top:779px">131.9K</div>
<div class="vb" style="left:993px;top:779px;height:26px"></div>
<div class="vb" style="left:1002px;top:779px;height:26px"></div>
<div class="vb" style="left:1011px;top:780px;height:25px"></div>
<div class="vb" style="left:1020px;top:778px;height:27px"></div>
<div class="vb" style="left:1029px;top:782px;height:23px"></div>
<div class="vb" style="left:1038px;top:781px;height:24px"></div>
<div class="vb" style="left:1047px;top:786px;height:19px"></div>
<div class="vb" style="left:1056px;top:785px;height:20px"></div>
<div class="vb" style="left:1065px;top:782px;height:23px"></div>
<div class="vb" style="left:1074px;top:783px;height:22px"></div>
<div class="vb" style="left:1083px;top:784px;height:21px"></div>
<div class="vb" style="left:1092px;top:792px;height:13px"></div>
<div class="fav" style="left:1124px;top:776px"><svg viewBox="0 0 16 16"><rect width="16" height="16" fill="#fff"/><path d="M2.500 11.600C5 8 8 3.500 10.300 2.100 11.500 3.500 10.500 6 9 7.500 7 9.500 4.500 11 2.500 11.600z" fill="#78c832"/><path d="M2 12.200C6 9.500 10 6.500 13.500 5.300 14.500 7 13.200 9 11 10.200 8 11.800 4.500 12.300 2 12.200z" fill="#1cb8a0"/><path d="M1.200 12.400C5 12.300 11 11.300 15 9.900 15.500 11.500 14 13 11.500 13.400 8 14 3.500 13.500 1.200 12.400z" fill="#0b7a5c"/></svg></div>
<div class="a dom" style="left:1163px;top:781px;font-size:14px;color:#2a3e52;letter-spacing:.33px">carecredit.com</div>
<div class="row" style="top:809px;background:#fff"></div>
<div class="vs" style="left:165px;top:809px;height:41px"></div>
<div class="cb" style="left:141px;top:822px;background:transparent"></div>
<div class="a t14 idx" style="left:166.600px;width:51px;text-align:center;top:820px">13</div>
<div class="a t14 lnk term" style="left:230px;top:822px">pet supplies</div>
<div class="a t14 trf" style="right:878px;top:822px">78.1K</div>
<div class="a t14 gr pct" style="left:722px;top:820px;letter-spacing:-.6px">0.09%</div>
<div class="a" style="left:722px;top:836px;width:71px;height:4px;background:#d3d8e8;border-radius:1.500px"></div>
<div class="a" style="left:722px;top:836px;width:1px;height:4px;background:#3e74fe"></div>
<div class="a t14 red chg" style="right:699px;top:820px;letter-spacing:-.3px">7.84%</div>
<svg class="a arr" style="left:834.5px;top:822.4px" width="9" height="10" viewBox="0 0 9 10"><path d="M4.500 .3v8.400M.8 5.200l3.700 3.700 3.700-3.700" fill="none" stroke="#f44336" stroke-width="1.300"/></svg>
<div class="a t14 vol" style="right:618px;top:820px">12.1K</div>
<div class="vb" style="left:993px;top:823px;height:23px"></div>
<div class="vb" style="left:1002px;top:832px;height:14px"></div>
<div class="vb" style="left:1011px;top:829px;height:17px"></div>
<div class="vb" style="left:1020px;top:834px;height:12px"></div>
<div class="vb" style="left:1029px;top:831px;height:15px"></div>
<div class="vb" style="left:1038px;top:826px;height:20px"></div>
<div class="vb" style="left:1047px;top:837px;height:9px"></div>
<div class="vb" style="left:1056px;top:825px;height:21px"></div>
<div class="vb" style="left:1065px;top:819px;height:27px"></div>
<div class="vb" style="left:1074px;top:821px;height:25px"></div>
<div class="vb" style="left:1083px;top:823px;height:23px"></div>
<div class="vb" style="left:1092px;top:830px;height:16px"></div>
<div class="fav" style="left:1124px;top:817px"><svg viewBox="0 0 16 16"><rect x="1" y="1" width="13.200" height="13" fill="#12a53c"/><ellipse cx="6.200" cy="9.600" rx="3.700" ry="3.200" fill="#fff"/><circle cx="4.400" cy="4.400" r="1.300" fill="#fff"/><circle cx="8" cy="3.700" r="1.250" fill="#fff"/><ellipse cx="11" cy="5.500" rx="1.300" ry="1" fill="#fff"/><ellipse cx="11.700" cy="8.600" rx="1.400" ry=".85" fill="#fff"/></svg></div>
<div class="a dom" style="left:1163px;top:822px;font-size:14px;color:#2a3e52;letter-spacing:.33px">petsuppliesplus.com</div>
<div class="row" style="top:850px;background:#fff"></div>
<div class="vs" style="left:165px;top:850px;height:41px"></div>
<div class="cb" style="left:141px;top:863px;background:transparent"></div>
<div class="a t14 idx" style="left:166.600px;width:51px;text-align:center;top:861px">14</div>
<div class="a t14 lnk term" style="left:230px;top:863px">cat</div>
<div class="a t14 trf" style="right:878px;top:863px">73.1K</div>
<div class="a t14 gr pct" style="left:722px;top:861px;letter-spacing:-.6px">0.08%</div>
<div class="a" style="left:722px;top:877px;width:71px;height:4px;background:#d3d8e8;border-radius:1.500px"></div>
<div class="a" style="left:722px;top:877px;width:1px;height:4px;background:#3e74fe"></div>
<div class="a t14 red chg" style="right:699px;top:861px;letter-spacing:-.3px">100.00%</div>
<svg class="a arr" style="left:818.8px;top:863.4px" width="9" height="10" viewBox="0 0 9 10"><path d="M4.500 .3v8.400M.8 5.200l3.700 3.700 3.700-3.700" fill="none" stroke="#f44336" stroke-width="1.300"/></svg>
<div class="a t14 vol" style="right:618px;top:861px">593.1K</div>
<div class="vb" style="left:993px;top:869px;height:18px"></div>
<div class="vb" style="left:1002px;top:860px;height:27px"></div>
<div class="vb" style="left:1011px;top:865px;height:22px"></div>
<div class="vb" style="left:1020px;top:867px;height:20px"></div>
<div class="vb" style="left:1029px;top:870px;height:17px"></div>
<div class="vb" style="left:1038px;top:868px;height:19px"></div>
<div class="vb" style="left:1047px;top:868px;height:19px"></div>
<div class="vb" style="left:1056px;top:867px;height:20px"></div>
<div class="vb" style="left:1065px;top:868px;height:19px"></div>
<div class="vb" style="left:1074px;top:867px;height:20px"></div>
<div class="vb" style="left:1083px;top:870px;height:17px"></div>
<div class="vb" style="left:1092px;top:870px;height:17px"></div>
<div class="fav" style="left:1124px;top:858px"><svg viewBox="0 0 16 16"><rect width="16" height="16" fill="#fff"/><text x="8" y="13.150" font-family="Liberation Serif, serif" font-size="14" fill="#0a0a0a" stroke="#0a0a0a" stroke-width=".25" text-anchor="middle" textLength="15.100" lengthAdjust="spacingAndGlyphs">W</text></svg></div>
<div class="a dom" style="left:1163px;top:863px;font-size:14px;color:#2a3e52;letter-spacing:.33px">wikipedia.org</div>
</div></body></html>
